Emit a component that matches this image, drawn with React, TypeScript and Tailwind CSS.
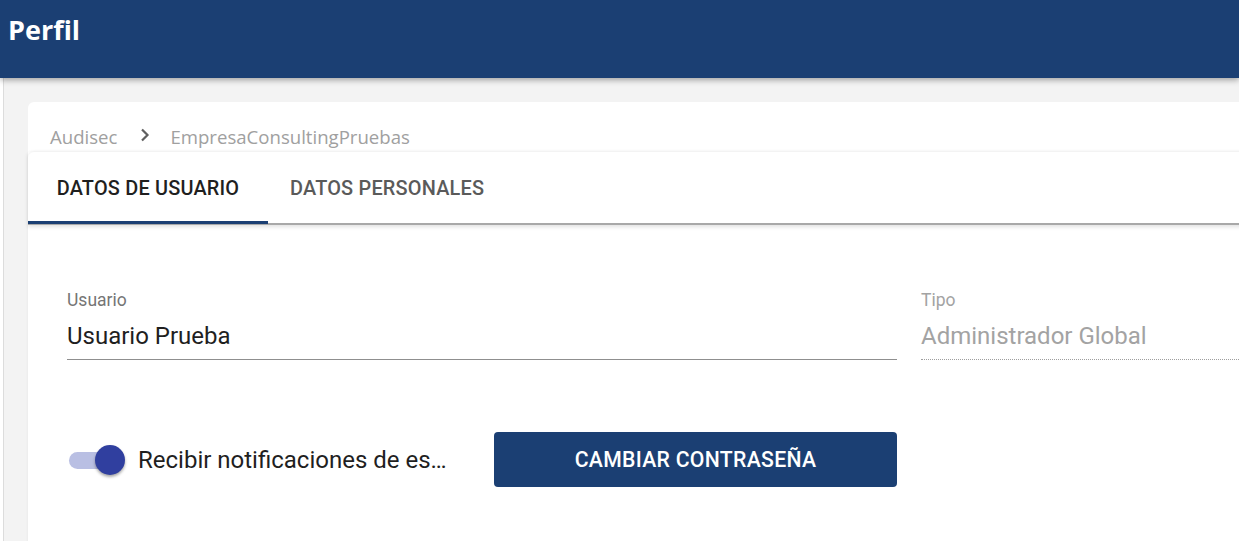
import { useState } from "react";

const App = () => {
  const [notify, setNotify] = useState<boolean>(true);
  const [tab, setTab] = useState<number>(0);

  return (
    <div className="h-[541px] w-[1239px] overflow-hidden bg-white font-['Roboto',sans-serif]">
      <header className="relative z-10 flex h-[78px] items-start bg-[#1b3f73] px-[8px] pt-[11px] shadow-[0_2px_6px_rgba(0,0,0,0.35)]">
        <h1 className="font-['Open_Sans',sans-serif] text-[27px] font-bold leading-[38px] text-white">
          Perfil
        </h1>
      </header>
      <div className="flex h-[463px]">
        <div className="w-[4px] shrink-0 border-r border-[#dcdcdc] bg-white" />
        <div className="flex-1 bg-[#f3f3f3] pl-[24px] pt-[24px]">
          <div className="w-[1400px] rounded-tl-[6px] bg-white">
            <div className="flex h-[50px] items-end pb-[1px] pl-[22px] font-['Open_Sans',sans-serif] text-[18.6px] text-[#a0a0a0]">
              <span>Audisec</span>
              <svg width="12" height="14" viewBox="0 0 12 14" className="mb-[9px] ml-[22px] mr-[19px]">
                <path d="M3 1.5 L8.5 7 L3 12.5" fill="none" stroke="#5f5f5f" strokeWidth="2.2" />
              </svg>
              <span>EmpresaConsultingPruebas</span>
            </div>
            <div className="relative z-0 rounded-tl-[6px] bg-white shadow-[0_-1px_3px_rgba(0,0,0,0.06)]">
              <div className="flex h-[73px] items-stretch border-b-2 border-[#a8a8a8] shadow-[0_2px_4px_rgba(0,0,0,0.12)]">
                <button
                  onClick={() => setTab(0)}
                  className={`relative w-[240px] pt-[2px] text-[19.9px] font-medium tracking-[0.2px] ${tab === 0 ? "text-[#1f1f1f]" : "text-[#5a5a5a]"}`}
                >
                  DATOS DE USUARIO
                  {tab === 0 && <span className="absolute bottom-[-1px] left-0 h-[3px] w-full bg-[#1b3f73]" />}
                </button>
                <button
                  onClick={() => setTab(1)}
                  className={`relative px-[22px] pt-[2px] text-[19.9px] font-medium tracking-[0.2px] ${tab === 1 ? "text-[#1f1f1f]" : "text-[#5a5a5a]"}`}
                >
                  DATOS PERSONALES
                  {tab === 1 && <span className="absolute bottom-[-1px] left-0 h-[3px] w-full bg-[#1b3f73]" />}
                </button>
              </div>
              <div className="grid grid-cols-[403px_403px_403px_403px] gap-x-[24px] pl-[39px] pt-[64px]">
                <div className="col-span-2 border-b border-[#8f8f8f]">
                  <p className="text-[17.5px] leading-[22px] text-[#757575]">Usuario</p>
                  <p className="pb-[9px] pt-[11px] text-[24px] leading-[28px] text-[#1f1f1f]">Usuario Prueba</p>
                </div>
                <div className="col-span-2 border-b border-dotted border-[#9e9e9e]">
                  <p className="text-[17.5px] leading-[22px] text-[#a3a3a3]">Tipo</p>
                  <p className="pb-[9px] pt-[11px] text-[24px] leading-[28px] text-[#a3a3a3]">Administrador Global</p>
                </div>
                <div className="mt-[72px] flex items-center">
                  <button
                    onClick={() => setNotify(!notify)}
                    className="relative ml-[2px] h-[30px] w-[58px] shrink-0"
                  >
                    <span className={`absolute left-0 top-[7px] h-[17px] w-[46px] rounded-full ${notify ? "bg-[#b9bfe3]" : "bg-[#bdbdbd]"}`} />
                    <span
                      className={`absolute top-0 h-[30px] w-[30px] rounded-full shadow-[0_2px_3px_rgba(0,0,0,0.35)] ${notify ? "left-[26px] bg-[#303f9f]" : "left-0 bg-[#fafafa]"}`}
                    />
                  </button>
                  <span className="ml-[11px] max-w-[313px] truncate text-[24px] text-[#1f1f1f]">
                    Recibir notificaciones de estado
                  </span>
                </div>
                <div className="mt-[72px]">
                  <button className="h-[55px] w-full rounded-[4px] bg-[#1b3f73] text-[21.2px] font-medium tracking-[0.3px] text-white">
                    CAMBIAR CONTRASEÑA
                  </button>
                </div>
              </div>
              <div className="h-[60px]" />
            </div>
          </div>
        </div>
      </div>
    </div>
  );
};

export default App;
